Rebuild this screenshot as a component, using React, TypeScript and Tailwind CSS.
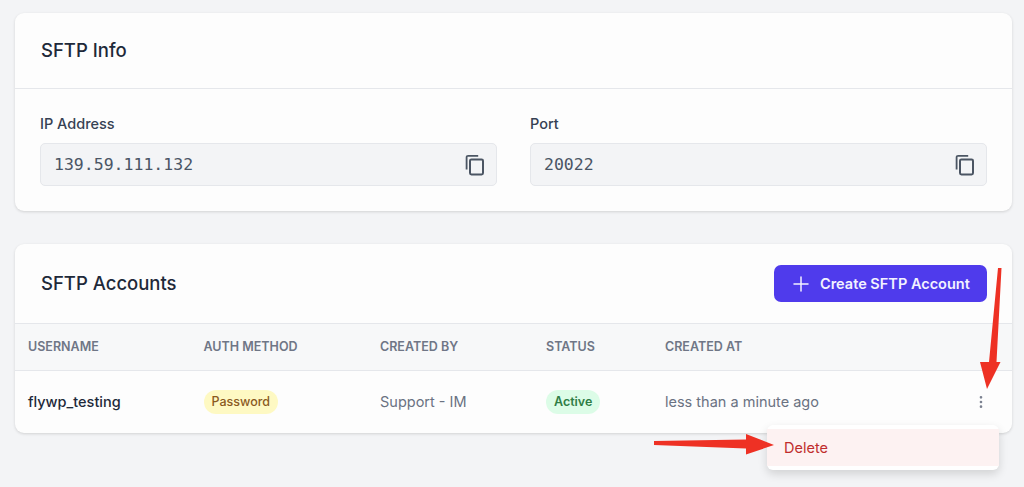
import { EllipsisVertical, Plus } from "lucide-react";

const COLUMNS = [
  { label: "USERNAME", width: "w-[175.5px]" },
  { label: "AUTH METHOD", width: "w-[176.5px]" },
  { label: "CREATED BY", width: "w-[166px]" },
  { label: "STATUS", width: "w-[119px]" },
  { label: "CREATED AT", width: "w-[300px]" },
];

function CopyIcon() {
  return (
    <svg width="22" height="22" viewBox="0 0 22 22" fill="none" className="text-[#4b5563]">
      <path d="M2.6 15.5V3.4c0-1 .6-1.6 1.6-1.6h10" stroke="currentColor" strokeWidth="1.8" />
      <rect x="6" y="5.4" width="13" height="15" rx="1.4" stroke="currentColor" strokeWidth="2" />
    </svg>
  );
}

function InfoField({ label, value }: { label: string; value: string }) {
  return (
    <div className="flex-1">
      <div className="mb-[9px] text-[14.5px] leading-[20px] font-medium text-gray-700">{label}</div>
      <div className="flex h-[43px] items-center justify-between rounded-[5px] border border-gray-200 bg-[#f3f4f6] pr-[10px] pl-[13px]">
        <span className="pt-[1px] font-['DejaVu_Sans_Mono',monospace] text-[16.5px] text-gray-600">{value}</span>
        <CopyIcon />
      </div>
    </div>
  );
}

export default function App() {
  return (
    <div className="relative h-[487px] w-[1024px] overflow-hidden bg-[#f3f4f6] pt-[13px] pr-[12px] pl-[15px] font-['Inter',sans-serif]">
      <section className="rounded-[9px] bg-[#fdfdfd] shadow-[0_1px_3px_rgba(0,0,0,0.14)]">
        <div className="flex h-[76px] items-center border-b border-gray-200 pr-[25px] pl-[26px]">
          <h2 className="text-[18.5px] font-medium text-gray-800">SFTP Info</h2>
        </div>
        <div className="flex gap-[33px] px-[25px] pt-[25px] pb-[25px]">
          <InfoField label="IP Address" value="139.59.111.132" />
          <InfoField label="Port" value="20022" />
        </div>
      </section>

      <section className="mt-[33px] rounded-[9px] bg-[#fdfdfd] shadow-[0_1px_3px_rgba(0,0,0,0.14)]">
        <div className="flex h-[79px] items-center justify-between pr-[25px] pl-[26px]">
          <h2 className="text-[18.5px] font-medium text-gray-800">SFTP Accounts</h2>
          <button className="flex h-[37px] w-[213px] items-center gap-[7px] rounded-[7px] bg-[#4f3bec] pl-[15px] text-[14.5px] font-semibold text-[#f3f2ff]">
            <Plus size={24} strokeWidth={1.5} />
            Create SFTP Account
          </button>
        </div>
        <div className="flex h-[48px] items-center border-y border-gray-200 bg-[#f7f8f9] pl-[13px]">
          {COLUMNS.map((col) => (
            <div key={col.label} className={`${col.width} text-[12.5px] font-semibold text-[#6f7686]`}>
              {col.label}
            </div>
          ))}
        </div>
        <div className="flex h-[62px] items-center pl-[13px] text-[14.5px]">
          <div className="w-[175.5px] font-medium text-gray-800">flywp_testing</div>
          <div className="w-[176.5px]">
            <span className="inline-block rounded-full bg-[#fef9c3] px-[8px] py-[3px] text-[12.5px] font-medium text-[#8a5a1e]">
              Password
            </span>
          </div>
          <div className="w-[166px] text-gray-500">Support - IM</div>
          <div className="w-[119px]">
            <span className="inline-block rounded-full bg-[#dcfce7] px-[8px] py-[3px] text-[12.5px] font-semibold text-[#2f7d45]">
              Active
            </span>
          </div>
          <div className="flex-1 text-gray-500">less than a minute ago</div>
          <EllipsisVertical size={16} strokeWidth={2} className="mr-[23px] text-[#7b8190]" />
        </div>
      </section>

      <div className="absolute top-[425px] left-[767px] w-[232px] rounded-[6px] bg-white py-[4px] shadow-[0_4px_10px_rgba(0,0,0,0.14)]">
        <div className="flex h-[37px] items-center bg-[#fdf2f2] pl-[17px] text-[14.5px] text-[#c02d2d]">Delete</div>
      </div>

      <svg className="absolute top-0 left-0" width="1024" height="487" viewBox="0 0 1024 487" fill="#ee3124">
        <polygon points="998,268 1001.5,268 996.5,362 1000.5,362 987,389 980,362 989,362" />
        <polygon points="654,441 746,439.5 746,434 774,445 746,454.5 746,448.5 654,445" />
      </svg>
    </div>
  );
}
